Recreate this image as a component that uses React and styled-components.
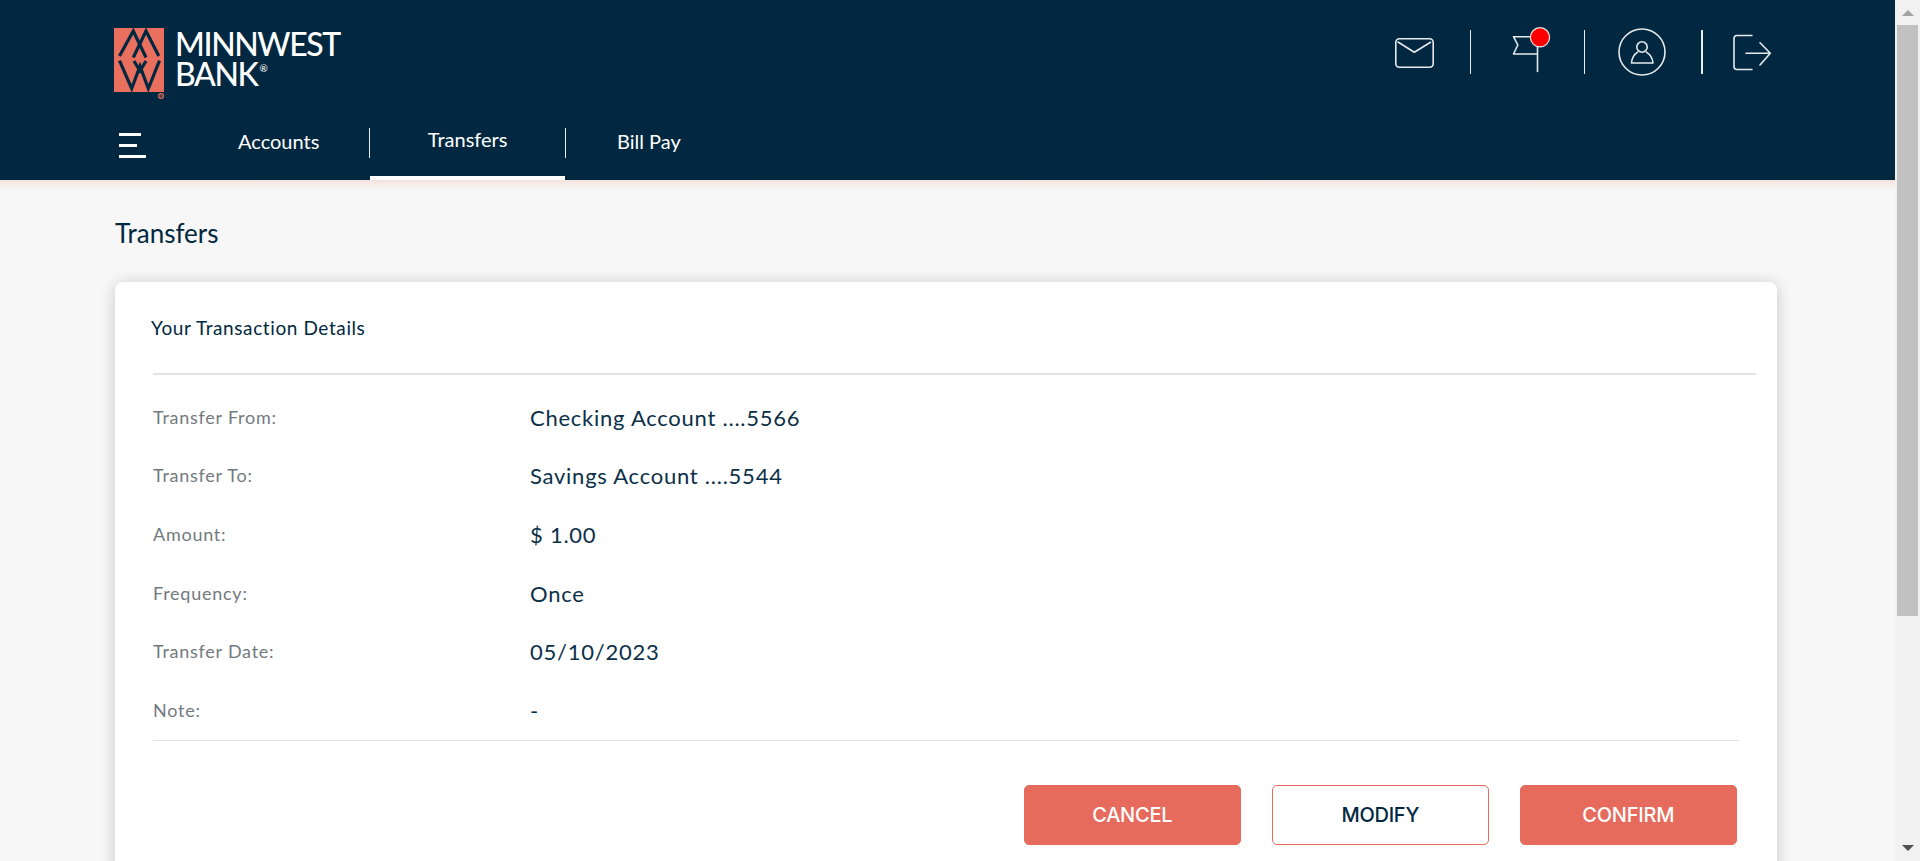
import React from "react";
import styled, { createGlobalStyle } from "styled-components";

const NAVY = "#012840";
const CORAL = "#e66b5c";

const Global = createGlobalStyle`
  html, body { margin: 0; padding: 0; height: 100%; overflow: hidden; background: #f7f7f7; }
  body { font-family: Lato, "Open Sans", sans-serif; color: ${NAVY}; }
  * { box-sizing: border-box; }
`;

const Shell = styled.div`
  display: flex;
  height: 861px;
  overflow: hidden;
`;
const Page = styled.div`
  flex: 1;
  min-width: 0;
  overflow: hidden;
  background: #f7f7f7;
`;
const Header = styled.header`
  height: 180px;
  background: ${NAVY};
  padding: 0 122px 0 114px;
  display: flex;
  flex-direction: column;
`;
const TopBar = styled.div`
  height: 120px;
  display: flex;
  align-items: flex-start;
  justify-content: space-between;
`;
const Logo = styled.div`
  display: flex;
  align-items: flex-start;
  gap: 7px;
  padding-top: 28px;
`;
const Wordmark = styled.div`
  font-family: Lato, sans-serif;
  font-weight: 500;
  font-size: 32px;
  line-height: 30px;
  color: #fff;
  letter-spacing: -1.4px;
  padding-top: 1px;
  sup { font-size: 10px; line-height: 0; vertical-align: 14px; letter-spacing: 0; margin-left: 2px; }
`;
const Tools = styled.div`
  display: flex;
  align-items: flex-start;
  padding-top: 26px;
`;
const Separator = styled.span`
  width: ${(p) => p.$w || 1}px;
  height: 44px;
  margin: 4px ${(p) => p.$r}px 0 ${(p) => p.$l}px;
  background: #e9edf0;
`;
const ToolIcon = styled.svg`
  display: block;
  margin-top: ${(p) => p.$top}px;
  fill: none;
  stroke: #e6eaec;
  stroke-width: 1.6;
  stroke-linecap: round;
  stroke-linejoin: round;
`;
const Nav = styled.nav`
  flex: 1;
  display: flex;
  align-items: stretch;
`;
const Burger = styled.div`
  width: 74px;
  padding: 13px 0 0 5px;
  display: flex;
  flex-direction: column;
  gap: 8px;
`;
const BurgerLine = styled.span`
  display: block;
  width: ${(p) => p.$w}px;
  height: 3px;
  background: #fff;
`;
const Tab = styled.div`
  position: relative;
  padding: 0 ${(p) => p.$pad}px;
  font-size: 20px;
  line-height: 24px;
  color: #fff;
  padding-top: ${(p) => (p.$active ? 7 : 9)}px;
  border-bottom: 4px solid ${(p) => (p.$active ? "#fff" : "transparent")};
`;
const TabRule = styled.span`
  width: 1px;
  height: 30px;
  margin-top: 8px;
  background: #e9edf0;
`;
const Glow = styled.div`
  height: 10px;
  background: linear-gradient(#f6e2de, #f7f7f7);
`;
const Content = styled.main`
  padding: 0 118px 0 115px;
`;
const Heading = styled.h1`
  margin: 28px 0 33px;
  font-weight: 400;
  font-size: 26px;
  line-height: 31px;
  color: ${NAVY};
`;
const Card = styled.section`
  background: #fff;
  border-radius: 8px;
  box-shadow: 0 2px 16px rgba(0, 0, 0, 0.2);
  padding: 0 0 40px 38px;
`;
const CardTitle = styled.h2`
  margin: 0 0 0 -2px;
  padding: 34px 0 34px;
  font-weight: 400;
  font-size: 19px;
  line-height: 23px;
  letter-spacing: 0.6px;
  color: ${NAVY};
`;
const Rule = styled.div`
  height: 2px;
  margin-right: 21px;
  background: #e3e3e3;
`;
const Details = styled.dl`
  margin: 0;
  padding: 13px 38px 0 0;
`;
const Row = styled.div`
  height: 58.6px;
  display: grid;
  grid-template-columns: 377px 1fr;
  align-items: center;
`;
const Label = styled.dt`
  font-size: 18px;
  font-weight: 400;
  letter-spacing: 0.75px;
  color: #737a7e;
  padding-bottom: 1px;
`;
const Value = styled.dd`
  margin: 0;
  font-size: 22px;
  font-weight: 400;
  letter-spacing: 0.75px;
  color: #0b3048;
`;
const ThinRule = styled.div`
  height: 1px;
  margin-right: 38px;
  background: #e3e3e3;
`;
const Actions = styled.div`
  display: flex;
  justify-content: flex-end;
  gap: 30.5px;
  padding: 44px 40px 0 0;
`;
const Button = styled.button`
  width: 217.5px;
  height: 60px;
  border-radius: 5px;
  border: 1px solid ${CORAL};
  background: ${(p) => (p.$outline ? "#fff" : CORAL)};
  color: ${(p) => (p.$outline ? NAVY : "#fff")};
  font-family: Inter, sans-serif;
  font-weight: 500;
  font-size: 20px;
  letter-spacing: -0.25px;
`;
const Scrollbar = styled.aside`
  width: 25px;
  height: 861px;
  background: #f1f1f1;
  display: flex;
  flex-direction: column;
  align-items: center;
  padding: 10px 2px 0;
`;
const Arrow = styled.span`
  width: 0;
  height: 0;
  border-left: 6px solid transparent;
  border-right: 6px solid transparent;
  border-${(p) => (p.$down ? "top" : "bottom")}: 6px solid ${(p) => (p.$down ? "#505050" : "#a3a3a3")};
`;
const Thumb = styled.div`
  width: 100%;
  height: 591px;
  margin: 9px 0 auto;
  background: #c1c1c1;
`;
const ArrowDown = styled(Arrow)`
  margin-bottom: 10px;
`;

const rows = [
  ["Transfer From:", "Checking Account ....5566"],
  ["Transfer To:", "Savings Account ....5544"],
  ["Amount:", "$ 1.00"],
  ["Frequency:", "Once"],
  ["Transfer Date:", "05/10/2023"],
  ["Note:", "-"],
];

const LogoMark = () => (
  <svg width="54" height="74" viewBox="0 0 54 74" style={{ display: "block" }}>
    <rect width="50" height="64" fill="#e96f5e" />
    <g fill="none" stroke={NAVY} strokeWidth="3.2">
      <path d="M5.5 28 L19.3 3 L32 29.5" />
      <path d="M19.3 29.5 L32 3 L44.8 28" />
      <path d="M5.5 32.7 L17.7 60.5 L26 38 L34.3 60.5 L45.5 32.7" />
      <path d="M20 33 L26 43 L32 33" />
    </g>
    <circle cx="47" cy="68" r="2.4" fill="none" stroke="#e96f5e" strokeWidth="1.2" />
    <circle cx="47" cy="68" r="0.8" fill="#e96f5e" />
  </svg>
);

export default function App() {
  return (
    <Shell>
      <Global />
      <Page>
        <Header>
          <TopBar>
            <Logo>
              <LogoMark />
              <Wordmark>
                MINNWEST
                <br />
                BANK<sup>®</sup>
              </Wordmark>
            </Logo>
            <Tools>
              <ToolIcon $top={12} width="39" height="30" viewBox="0 0 39 30">
                <rect x="0.8" y="0.8" width="37.4" height="28.4" rx="3.5" />
                <path d="M3 4 L19.3 14.3 L35.5 4.3" />
              </ToolIcon>
              <Separator $l={36} $r={41} />
              <ToolIcon $top={-1} width="40" height="48" viewBox="0 0 40 48">
                <path d="M25.5 22 V46.5 M25.5 29 H1.5 L5.8 20 L1.5 11.7 H20" />
                <circle cx="28" cy="12.3" r="9.6" fill="#f00" stroke="#e6eaec" strokeWidth="1.2" />
              </ToolIcon>
              <Separator $l={32} $r={33} />
              <ToolIcon $top={2} width="48" height="48" viewBox="0 0 48 48">
                <circle cx="24" cy="24" r="23" />
                <circle cx="24" cy="19" r="5.2" />
                <path d="M13.5 35 H35 C34.6 30 31.5 26.2 28.4 24.2 M19.6 24.2 C16.5 26.2 13.9 30 13.5 35" />
              </ToolIcon>
              <Separator $w={2} $l={35} $r={29} />
              <ToolIcon $top={8} width="41" height="37" viewBox="0 0 41 37">
                <path d="M20 1.5 H5 A3 3 0 0 0 2 4.5 V32.5 A3 3 0 0 0 5 35.5 H20" />
                <path d="M14 19.3 H38.3 M28 8.7 L38.3 19.3 L28 31" />
              </ToolIcon>
            </Tools>
          </TopBar>
          <Nav>
            <Burger>
              <BurgerLine $w={22} />
              <BurgerLine $w={18} />
              <BurgerLine $w={27} />
            </Burger>
            <Tab $pad={50}>Accounts</Tab>
            <TabRule />
            <Tab $pad={57.5} $active>
              Transfers
            </Tab>
            <TabRule />
            <Tab $pad={51}>Bill Pay</Tab>
          </Nav>
        </Header>
        <Glow />
        <Content>
          <Heading>Transfers</Heading>
          <Card>
            <CardTitle>Your Transaction Details</CardTitle>
            <Rule />
            <Details>
              {rows.map(([label, value]) => (
                <Row key={label}>
                  <Label>{label}</Label>
                  <Value>{value}</Value>
                </Row>
              ))}
            </Details>
            <ThinRule />
            <Actions>
              <Button>CANCEL</Button>
              <Button $outline>MODIFY</Button>
              <Button>CONFIRM</Button>
            </Actions>
          </Card>
        </Content>
      </Page>
      <Scrollbar>
        <Arrow />
        <Thumb />
        <ArrowDown $down />
      </Scrollbar>
    </Shell>
  );
}
